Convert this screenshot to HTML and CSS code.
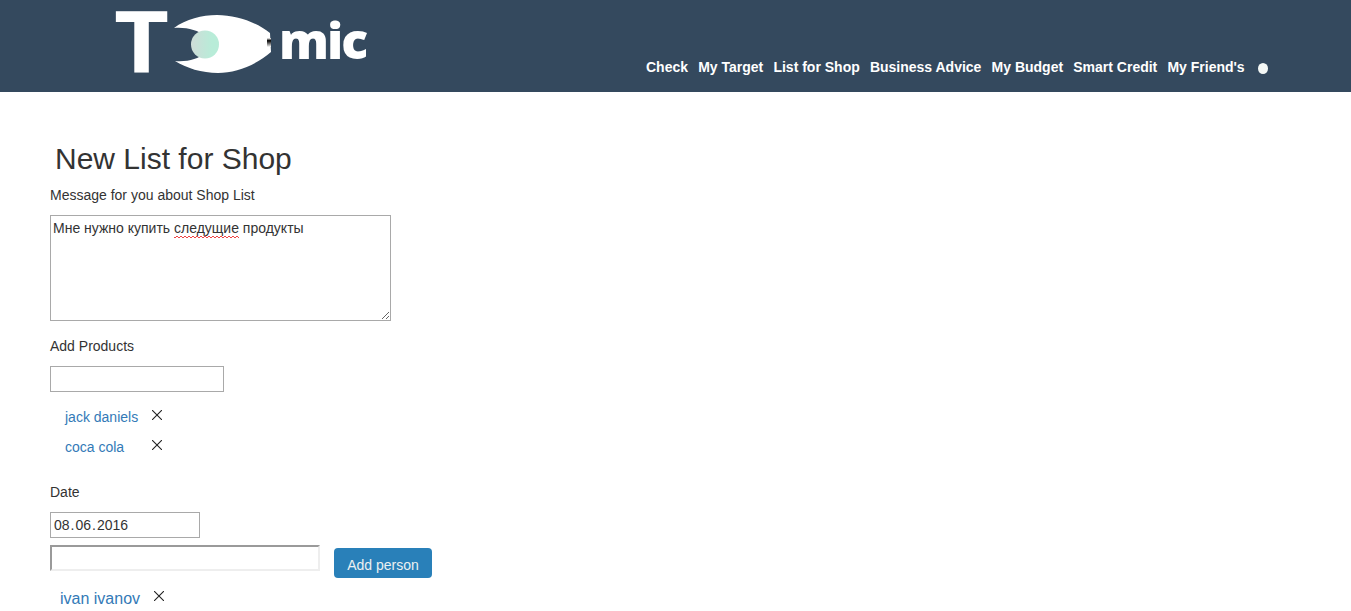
FILE: index.html
```html
<!DOCTYPE html>
<html lang="en">
<head>
<meta charset="utf-8">
<title>New List for Shop</title>
<link rel="stylesheet" href="styles.css">
</head>
<body>
<header class="topbar">
  <a class="logo" href="#">
    <span class="logo-t">T</span>
    <svg class="logo-eye" width="100" height="60" viewBox="0 0 100 60" aria-hidden="true">
      <defs>
        <linearGradient id="iris" x1="0" x2="1" y1="0" y2="0">
          <stop offset="0" stop-color="#cfdcd8"/>
          <stop offset="0.75" stop-color="#b8ecd8"/>
        </linearGradient>
        <linearGradient id="glint" x1="0" x2="0" y1="0" y2="1">
          <stop offset="0" stop-color="#fff"/>
          <stop offset="0.3" stop-color="#000"/>
          <stop offset="1" stop-color="#fff"/>
        </linearGradient>
      </defs>
      <path fill="#fff" d="M0 13 C12 4 28 0 43 0 C62 0 82 7 96 18 L97 37 C82 50 62 58 44 58 C28 58 12 53 1 46 C14 47 24 44 31 38 L31 21 C24 15 12 12 0 13 Z"/>
      <circle cx="31" cy="29.500" r="14" fill="url(#iris)"/>
      <rect x="93" y="23" width="4" height="9" fill="url(#glint)"/>
    </svg>
    <span class="logo-mic">mic</span>
  </a>
  <nav class="menu">
    <a href="#">Check</a>
    <a href="#">My Target</a>
    <a href="#">List for Shop</a>
    <a href="#">Business Advice</a>
    <a href="#">My Budget</a>
    <a href="#">Smart Credit</a>
    <a href="#">My Friend's</a>
    <span class="menu-dot"></span>
  </nav>
</header>
<main class="page">
  <h1 class="title">New List for Shop</h1>
  <p class="label">Message for you about Shop List</p>
  <div class="message">Мне нужно купить <span class="misspelled">следущие</span> продукты</div>
  <p class="label label-products">Add Products</p>
  <input class="field field-product" type="text">
  <ul class="items">
    <li class="item"><a class="item-link" href="#">jack daniels</a><svg class="remove" width="10" height="10" viewBox="0 0 10 10" aria-hidden="true"><path d="M0 0L10 10M10 0L0 10"/></svg></li>
    <li class="item"><a class="item-link" href="#">coca cola</a><svg class="remove" width="10" height="10" viewBox="0 0 10 10" aria-hidden="true"><path d="M0 0L10 10M10 0L0 10"/></svg></li>
  </ul>
  <p class="label label-date">Date</p>
  <div class="field field-date"><span>08</span><span class="date-sep">.</span><span>06</span><span class="date-sep">.</span><span>2016</span></div>
  <div class="person-row">
    <input class="field-person" type="text">
    <button class="add-person" type="button">Add person</button>
  </div>
  <div class="person">
    <a class="person-link" href="#">ivan ivanov</a><svg class="remove" width="10" height="10" viewBox="0 0 10 10" aria-hidden="true"><path d="M0 0L10 10M10 0L0 10"/></svg>
  </div>
</main>
</body>
</html>
```
FILE: styles.css
```css
* {
  box-sizing: border-box;
}

html,
body {
  height: 611px;
  overflow: hidden;
}

body {
  margin: 0;
  background: #fff;
  color: #333;
  font-family: "Liberation Sans", Arial, sans-serif;
  font-size: 14px;
  line-height: 20px;
}

a {
  text-decoration: none;
}

.topbar {
  display: flex;
  height: 92px;
  background: #34495e;
}

.logo {
  position: relative;
  display: block;
  flex: none;
  width: 530px;
  margin-left: 116px;
  color: #fff;
  font-family: "Open Sans", sans-serif;
  font-weight: 800;
}

.logo-t {
  position: absolute;
  left: -2px;
  top: -3px;
  font-size: 86px;
  font-weight: 700;
  line-height: 86px;
  transform: scaleX(1.106);
  transform-origin: left top;
}

.logo-eye {
  position: absolute;
  left: 58px;
  top: 15px;
}

.logo-mic {
  position: absolute;
  left: 163px;
  top: 6px;
  font-size: 50px;
  line-height: 68px;
  letter-spacing: -2px;
}

.menu {
  display: flex;
  align-items: center;
  gap: 10.150px;
  height: 20px;
  margin-top: 57px;
  font-size: 14px;
  font-weight: 700;
}

.menu a {
  color: #fff;
}

.menu-dot {
  width: 10px;
  height: 11px;
  margin-left: 3.350px;
  margin-top: 2px;
  border-radius: 50%;
  background: #f4f8f6;
}

.page {
  padding: 50px 0 0 50px;
}

.title {
  margin: 0 0 10px;
  padding-left: 5px;
  font-size: 30px;
  font-weight: 400;
  line-height: 33px;
}

.label {
  margin: 0 0 10px;
}

.message {
  width: 341px;
  height: 106px;
  overflow: auto;
  padding: 2px;
  border: 1px solid #a9a9a9;
  line-height: 20px;
  resize: both;
}

.misspelled {
  padding-bottom: 2px;
  background-image:
    repeating-linear-gradient(90deg, #e44 0 2px, transparent 2px 4px),
    repeating-linear-gradient(90deg, transparent 0 2px, #e44 2px 4px);
  background-repeat: no-repeat;
  background-size: 100% 1px;
  background-position: 0 100%, 0 calc(100% - 1px);
}

.label-products {
  margin-top: 15px;
}

.field {
  display: block;
  height: 26px;
  padding: 1px 3px;
  border: 1px solid #a9a9a9;
  background: #fff;
  color: #333;
  font: 14px/22px "Liberation Sans", Arial, sans-serif;
}

.field-product {
  width: 174px;
}

.field-date {
  width: 150px;
}

.date-sep {
  margin: 0 1px;
}

.items {
  margin: 10px 0 0;
  padding: 0 0 0 15px;
  list-style: none;
}

.item {
  display: flex;
  align-items: flex-start;
  height: 30px;
  padding-top: 5px;
}

.item-link {
  width: 87px;
  color: #337ab7;
}

.remove {
  flex: none;
  margin-top: 3px;
  fill: none;
  stroke: #222;
  stroke-width: 1.100;
}

.label-date {
  margin-top: 20px;
}

.person-row {
  display: flex;
  align-items: flex-start;
  gap: 14px;
  margin-top: 7px;
}

.field-person {
  width: 270px;
  height: 26px;
  border-width: 2px;
  border-style: solid;
  border-color: #9a9a9a #eee #eee #9a9a9a;
  background: #fff;
}

.add-person {
  width: 98px;
  height: 30px;
  margin-top: 3px;
  padding: 4px 0 0;
  border: 0;
  border-radius: 4px;
  background: #2980b9;
  color: #ecf0f1;
  font: 14px/20px "Liberation Sans", Arial, sans-serif;
}

.person {
  display: flex;
  align-items: flex-start;
  margin-top: 9px;
  padding-left: 10px;
}

.person-link {
  width: 94px;
  color: #337ab7;
  font-size: 16px;
  line-height: 24px;
}

.person .remove {
  margin-top: 4px;
}
```
